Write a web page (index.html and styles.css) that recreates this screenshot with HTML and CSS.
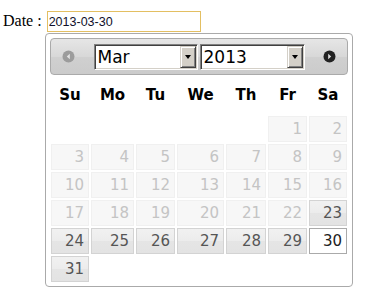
FILE: index.html
```html
<!DOCTYPE html>
<html lang="en">
<head>
    <meta charset="UTF-8">
    <title>Datepicker</title>
    <link rel="stylesheet" href="styles.css">
</head>
<body>
    <div class="field">
        <label for="date">Date :</label>
        <input type="text" id="date" class="date-input" value="2013-03-30">
    </div>

    <!-- popup calendar under the input -->
    <div class="datepicker">
        <div class="dp-header">
            <a class="dp-nav disabled" title="Prev">
                <svg width="13" height="13" viewBox="0 0 13 13"><circle cx="6.5" cy="6.5" r="6" fill="#9c9c9c"/><path d="M7.8 3.8 L4.8 6.5 L7.8 9.2 Z" fill="#e4e4e4"/></svg>
            </a>
            <div class="dp-selects">
                <div class="dp-select month">
                    <select><option>Mar</option></select>
                    <span class="dp-arrow"><i></i></span>
                </div>
                <div class="dp-select year">
                    <select><option>2013</option></select>
                    <span class="dp-arrow"><i></i></span>
                </div>
            </div>
            <a class="dp-nav" title="Next">
                <svg width="13" height="13" viewBox="0 0 13 13"><circle cx="6.5" cy="6.5" r="6" fill="#222"/><path d="M5.2 3.8 L8.2 6.5 L5.2 9.2 Z" fill="#ddd"/></svg>
            </a>
        </div>

        <table class="dp-calendar">
            <colgroup>
                <col style="width: 40px"><col style="width: 45px"><col style="width: 41px">
                <col style="width: 49px"><col style="width: 42px"><col style="width: 41px"><col style="width: 40px">
            </colgroup>
            <thead>
                <tr><th>Su</th><th>Mo</th><th>Tu</th><th>We</th><th>Th</th><th>Fr</th><th>Sa</th></tr>
            </thead>
            <tbody>
                <tr>
                    <td></td><td></td><td></td><td></td><td></td>
                    <td><a class="day disabled">1</a></td><td><a class="day disabled">2</a></td>
                </tr>
                <tr>
                    <td><a class="day disabled">3</a></td><td><a class="day disabled">4</a></td><td><a class="day disabled">5</a></td>
                    <td><a class="day disabled">6</a></td><td><a class="day disabled">7</a></td><td><a class="day disabled">8</a></td>
                    <td><a class="day disabled">9</a></td>
                </tr>
                <tr>
                    <td><a class="day disabled">10</a></td><td><a class="day disabled">11</a></td><td><a class="day disabled">12</a></td>
                    <td><a class="day disabled">13</a></td><td><a class="day disabled">14</a></td><td><a class="day disabled">15</a></td>
                    <td><a class="day disabled">16</a></td>
                </tr>
                <tr>
                    <td><a class="day disabled">17</a></td><td><a class="day disabled">18</a></td><td><a class="day disabled">19</a></td>
                    <td><a class="day disabled">20</a></td><td><a class="day disabled">21</a></td><td><a class="day disabled">22</a></td>
                    <td><a class="day">23</a></td>
                </tr>
                <tr>
                    <td><a class="day">24</a></td><td><a class="day">25</a></td><td><a class="day">26</a></td>
                    <td><a class="day">27</a></td><td><a class="day">28</a></td><td><a class="day">29</a></td>
                    <td><a class="day active">30</a></td>
                </tr>
                <tr>
                    <td><a class="day">31</a></td><td></td><td></td><td></td><td></td><td></td><td></td>
                </tr>
            </tbody>
        </table>
    </div>
</body>
</html>
```

FILE: styles.css
```css
body {
    margin: 0;
    padding: 11px 0 0 3px;
    font-family: "Liberation Serif", "Times New Roman", serif;
    font-size: 16px;
    background: white;
}

.field label {
    margin-right: 1px;
}

.date-input {
    width: 154px;
    height: 21px;
    box-sizing: border-box;
    border: 1px solid #e3bf62;
    padding: 0 1px;
    margin: 0;
    font-family: "Liberation Sans", Arial, sans-serif;
    font-size: 12.5px;
    color: #10102a;
    outline: none;
    vertical-align: baseline;
}

.datepicker {
    position: absolute;
    top: 33px;
    left: 45px;
    width: 308px;
    box-sizing: border-box;
    padding: 4px 4px 3px;
    background: white;
    border: 1px solid #aaa;
    border-radius: 4px;
    font-family: "DejaVu Sans", Verdana, sans-serif;
}

.dp-header {
    height: 37px;
    box-sizing: border-box;
    border: 1px solid #aaa;
    border-radius: 4px;
    background: linear-gradient(#e6e6e6, #d8d8d8 50%, #d0d0d0 51%, #cbcbcb);
    display: flex;
    align-items: center;
    justify-content: space-between;
}

.dp-nav {
    width: 35px;
    height: 100%;
    display: flex;
    align-items: center;
    justify-content: center;
    cursor: pointer;
}

.dp-nav svg {
    display: block;
}

.dp-selects {
    display: flex;
    gap: 2px;
}

.dp-select {
    height: 26px;
    box-sizing: border-box;
    display: flex;
    background: white;
    border: 1px solid;
    border-color: #808080 #fff #fff #808080;
    box-shadow: inset 1px 1px #404040, inset -1px -1px #d4d0c8;
    padding: 1px;
}

.dp-select.month {
    width: 104px;
}

.dp-select.year {
    width: 105px;
}

.dp-select select {
    flex: 1;
    min-width: 0;
    appearance: none;
    -webkit-appearance: none;
    border: none;
    background: white;
    margin: 0;
    padding: 0 2px;
    font-family: "DejaVu Sans", Verdana, sans-serif;
    font-size: 17px;
    color: #000;
    outline: none;
}

.dp-arrow {
    width: 16px;
    box-sizing: border-box;
    background: #d4d0c8;
    border: 1px solid;
    border-color: #d4d0c8 #404040 #404040 #d4d0c8;
    box-shadow: inset 1px 1px #fff, inset -1px -1px #808080;
    display: flex;
    align-items: center;
    justify-content: center;
}

.dp-arrow i {
    width: 0;
    height: 0;
    border-left: 3.5px solid transparent;
    border-right: 3.5px solid transparent;
    border-top: 4px solid #000;
}

.dp-calendar {
    width: 100%;
    table-layout: fixed;
    border-collapse: collapse;
    font-size: 15px;
    margin: 0;
}

.dp-calendar th {
    padding: 11px 0;
    line-height: 18px;
    font-weight: bold;
    text-align: center;
    color: #000;
}

.dp-calendar td {
    padding: 1px;
}

.day {
    display: block;
    padding: 3px 4px;
    line-height: 18px;
    text-align: right;
    text-decoration: none;
    color: #555;
    border: 1px solid #d3d3d3;
    background: linear-gradient(#f1f1f1, #ececec 50%, #e5e5e5 51%, #e3e3e3);
    cursor: pointer;
}

.day.disabled {
    color: #c4c4c4;
    border-color: #f0f0f0;
    background: #f7f7f7;
    cursor: default;
}

.day.active {
    background: white;
    border-color: #aaa;
    color: #212121;
}
```
